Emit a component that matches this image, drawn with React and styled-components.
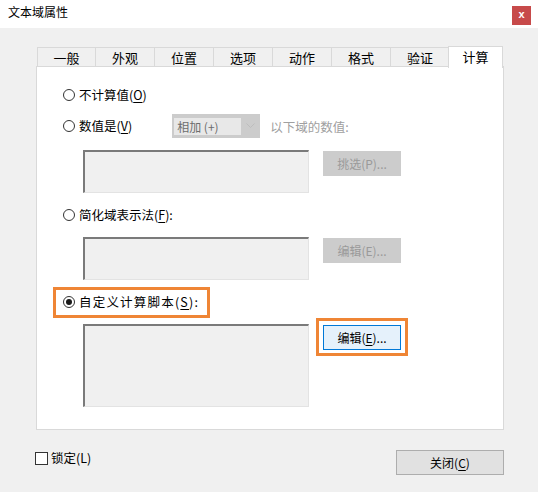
import styled, { createGlobalStyle } from 'styled-components';

const GlobalStyle = createGlobalStyle`
  html, body {
    margin: 0;
    padding: 0;
    background: #f0f0f0;
  }
  body {
    font-family: "Noto Sans CJK SC", "Liberation Sans", sans-serif;
    font-size: 12px;
    color: #000;
  }
`;

const Window = styled.div`
  width: 538px;
  height: 492px;
  display: flex;
  flex-direction: column;
  background: #f0f0f0;
`;

const TitleBar = styled.div`
  height: 28px;
  background: #fff;
  display: flex;
  align-items: center;
  justify-content: space-between;
  padding: 0 7px 4px 8px;
  box-sizing: border-box;
`;

const Title = styled.span`
  font-size: 12px;
  line-height: 16px;
`;

const CloseButton = styled.div`
  width: 19px;
  height: 19px;
  margin-top: 6px;
  background: #c74a4a;
  color: #fff;
  font-family: "Liberation Sans", sans-serif;
  font-size: 11px;
  font-weight: bold;
  display: flex;
  align-items: center;
  justify-content: center;
  line-height: 1;
  padding-bottom: 2px;
  box-sizing: border-box;
`;

const Body = styled.div`
  flex: 1;
  padding: 17px 34px 0 36px;
  display: flex;
  flex-direction: column;
`;

const TabStrip = styled.div`
  display: flex;
  align-items: flex-end;
  height: 22px;
  padding-left: 1px;
  position: relative;
  z-index: 1;
`;

const Tab = styled.div`
  box-sizing: border-box;
  width: ${(p) => (p.$active ? '55px' : '59px')};
  height: ${(p) => (p.$active ? '22px' : '20px')};
  margin-left: ${(p) => (p.$active ? '-2px' : '0')};
  margin-bottom: ${(p) => (p.$active ? '-1px' : '0')};
  border: 1px solid #d9d9d9;
  border-left-width: ${(p) => (p.$first || p.$active ? '1px' : '0')};
  border-bottom: ${(p) => (p.$active ? 'none' : '1px solid #d9d9d9')};
  background: ${(p) => (p.$active ? '#fff' : '#f0f0f0')};
  display: flex;
  align-items: center;
  justify-content: center;
  font-size: 13px;
  padding-bottom: ${(p) => (p.$active ? '3px' : '0')};
`;

const Panel = styled.div`
  box-sizing: border-box;
  height: 364px;
  margin-top: -1px;
  background: #fff;
  border: 1px solid #d9d9d9;
  padding-left: 26px;
  display: flex;
  flex-direction: column;
  align-items: flex-start;
`;

const Row = styled.div`
  display: flex;
  align-items: ${(p) => p.$align || 'center'};
  margin-top: ${(p) => p.$top}px;
  padding-left: ${(p) => p.$indent || 0}px;
`;

const RadioLabel = styled.label`
  display: inline-flex;
  align-items: center;
  height: 16px;
  line-height: 16px;
  white-space: nowrap;
  font-size: 12.5px;
  letter-spacing: ${(p) => p.$spacing || 0}px;
`;

const RadioCircle = styled.span`
  box-sizing: border-box;
  width: 12px;
  height: 12px;
  border-radius: 50%;
  border: 1px solid #333;
  background: #fff;
  margin-right: 4px;
  display: inline-flex;
  align-items: center;
  justify-content: center;

  &::after {
    content: '';
    width: 6px;
    height: 6px;
    border-radius: 50%;
    background: ${(p) => (p.$checked ? '#1a1a1a' : 'transparent')};
  }
`;

const Key = styled.span`
  text-decoration: underline;
  text-underline-offset: 2px;
`;

const Select = styled.div`
  box-sizing: border-box;
  width: 88px;
  height: 24px;
  margin-left: 40px;
  background: #cccccc;
  border: 1px solid #cccccc;
  display: flex;
  align-items: center;
  padding: 3px 0 3px 1px;
`;

const SelectValue = styled.div`
  width: 67px;
  height: 17px;
  background: #e8e8e8;
  color: #6d6d6d;
  font-size: 12px;
  line-height: 17px;
  padding-left: 3px;
  box-sizing: border-box;
  white-space: nowrap;
`;

const SelectArrow = styled.div`
  flex: 1;
  display: flex;
  align-items: center;
  justify-content: center;
`;

const MutedText = styled.span`
  color: #a0a0a0;
  margin-left: 10px;
  font-size: 12.5px;
  white-space: nowrap;
`;

const TextArea = styled.div`
  box-sizing: border-box;
  width: 226px;
  height: ${(p) => p.$height}px;
  background: #f0f0f0;
  border-top: 2px solid #7a7a7a;
  border-left: 2px solid #7a7a7a;
  border-right: 1px solid #e3e3e3;
  border-bottom: 1px solid #e3e3e3;
`;

const Button = styled.div`
  box-sizing: border-box;
  width: ${(p) => p.$width || 78}px;
  height: 25px;
  display: flex;
  align-items: center;
  justify-content: center;
  font-size: 12px;
  white-space: nowrap;
  background: ${(p) =>
    p.$disabled ? '#cccccc' : p.$focused ? '#e5f1fb' : '#e1e1e1'};
  border: 1px solid
    ${(p) => (p.$disabled ? '#cccccc' : p.$focused ? '#0078d7' : '#adadad')};
  color: ${(p) => (p.$disabled ? '#9a9a9a' : '#000')};
`;

const ButtonSlot = styled.div`
  margin-left: 14px;
  margin-top: 1px;
`;

const Highlight = styled.div`
  display: inline-flex;
  border: 3px solid #ef8535;
  padding: ${(p) => p.$pad};
  margin: ${(p) => p.$margin};
`;

const Footer = styled.div`
  display: flex;
  justify-content: space-between;
  align-items: flex-start;
  padding-top: 20px;
`;

const CheckLabel = styled.label`
  display: inline-flex;
  align-items: center;
  margin-left: -1px;
  font-size: 12.5px;
  line-height: 16px;
`;

const CheckBox = styled.span`
  box-sizing: border-box;
  width: 13px;
  height: 13px;
  border: 1px solid #333;
  background: #fff;
  margin-right: 3px;
`;

const ChevronDown = () => (
  <svg width="9" height="6" viewBox="0 0 9 6">
    <path d="M0.5 0.5 L4.5 4.5 L8.5 0.5" fill="none" stroke="#bdbdbd" strokeWidth="1" />
  </svg>
);

const tabs = ['一般', '外观', '位置', '选项', '动作', '格式', '验证', '计算'];

const App = () => {
  return (
    <Window>
      <GlobalStyle />
      <TitleBar>
        <Title>文本域属性</Title>
        <CloseButton>x</CloseButton>
      </TitleBar>

      <Body>
        <TabStrip>
          {tabs.map((t, i) => (
            <Tab key={t} $first={i === 0} $active={t === '计算'}>
              {t}
            </Tab>
          ))}
        </TabStrip>

        <Panel>
          <Row $top={20}>
            <RadioLabel>
              <RadioCircle />
              不计算值(<Key>O</Key>)
            </RadioLabel>
          </Row>

          <Row $top={11}>
            <RadioLabel>
              <RadioCircle />
              数值是(<Key>V</Key>)
            </RadioLabel>
            <Select>
              <SelectValue>相加 (+)</SelectValue>
              <SelectArrow>
                <ChevronDown />
              </SelectArrow>
            </Select>
            <MutedText>以下域的数值:</MutedText>
          </Row>

          <Row $top={12} $indent={20} $align="flex-start">
            <TextArea $height={43} />
            <ButtonSlot>
              <Button $disabled>挑选(P)...</Button>
            </ButtonSlot>
          </Row>

          <Row $top={14}>
            <RadioLabel>
              <RadioCircle />
              简化域表示法(<Key>F</Key>):
            </RadioLabel>
          </Row>

          <Row $top={14} $indent={20} $align="flex-start">
            <TextArea $height={43} />
            <ButtonSlot>
              <Button $disabled>编辑(E)...</Button>
            </ButtonSlot>
          </Row>

          <Row $top={14}>
            <Highlight $pad="4px 8px 5px 7px" $margin="-7px -11px -8px -10px">
              <RadioLabel $spacing={1.2}>
                <RadioCircle $checked />
                自定义计算脚本(<Key>S</Key>):
              </RadioLabel>
            </Highlight>
          </Row>

          <Row $top={14} $indent={20} $align="flex-start">
            <TextArea $height={83} />
            <ButtonSlot>
              <Highlight $pad="4px 4px 3px 4px" $margin="-7px -7px 0 -7px">
                <Button $focused>
                  编辑(<Key>E</Key>)...
                </Button>
              </Highlight>
            </ButtonSlot>
          </Row>
        </Panel>

        <Footer>
          <CheckLabel>
            <CheckBox />
            锁定(L)
          </CheckLabel>
          <Button $width={108}>
            关闭(<Key>C</Key>)
          </Button>
        </Footer>
      </Body>
    </Window>
  );
};

export default App;
